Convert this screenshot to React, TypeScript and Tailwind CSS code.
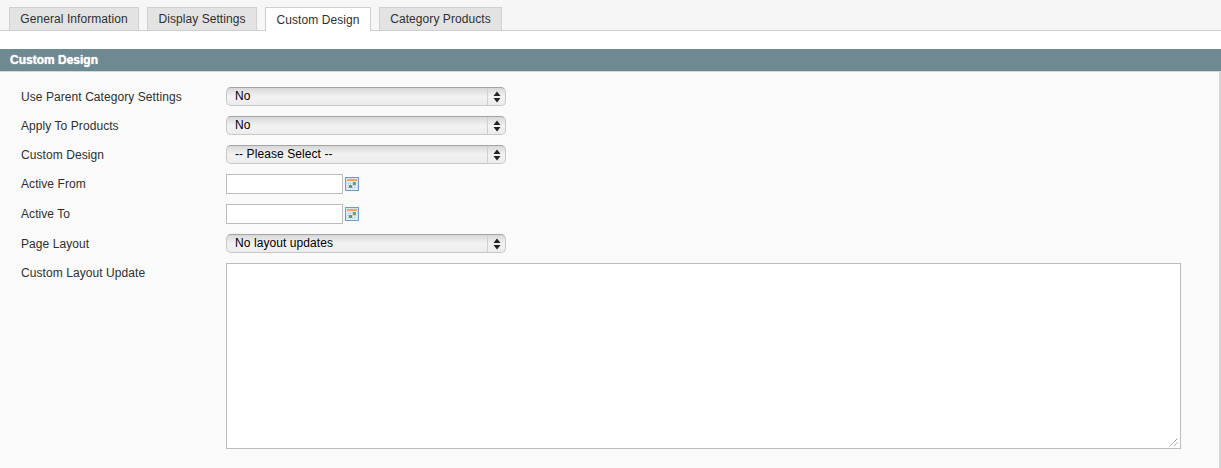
const tabs = [
  { name: "General Information", width: "w-[130px]" },
  { name: "Display Settings", width: "w-[110px]" },
  { name: "Custom Design", width: "w-[106px]", active: true },
  { name: "Category Products", width: "w-[123px]" },
];

function Label({ children }: { children: string }) {
  return <label className="mt-[1px] w-[226px] shrink-0 pl-[21px] leading-[18px] tracking-[0.07px]">{children}</label>;
}

function FakeSelect({ value }: { value: string }) {
  return (
    <div className="flex h-[19px] w-[280px] items-stretch rounded-[5px] border border-[#c8c8c8] border-t-[#a4a4a4] bg-gradient-to-b from-[#d8d8d8] via-[#f2f2f2] to-[#ececec] text-black">
      <span className="flex-1 pl-2 leading-[16px] tracking-[0.08px]">{value}</span>
      <span className="flex w-[18px] items-center justify-center border-l border-[#d0d0d0]">
        <svg width="8" height="12" viewBox="0 0 8 12">
          <path d="M4 0.5 L7.5 5 H0.5 Z M0.5 7 H7.5 L4 11.5 Z" fill="#222" />
        </svg>
      </span>
    </div>
  );
}

function CalendarIcon() {
  return (
    <svg width="14" height="14" viewBox="0 0 14 14" className="ml-[2px] mt-[3px]">
      <rect x="0.5" y="0.5" width="13" height="13" fill="#d5e4f6" stroke="#6f9bd4" />
      <rect x="2" y="2" width="10" height="2.5" fill="#f5a65b" />
      <rect x="2" y="4.5" width="10" height="8" fill="#f4f7fb" />
      <path d="M2 6.5h10M2 8.5h10M2 10.5h10M3.5 5v7M5.5 5v7M7.5 5v7M9.5 5v7" stroke="#b9cde6" strokeWidth="0.7" />
      <rect x="8" y="5" width="3" height="3" fill="#63ad63" />
      <rect x="4" y="8" width="3" height="3" fill="#5aa55a" />
    </svg>
  );
}

function DateInput() {
  return (
    <div className="flex">
      <div className="h-[20px] w-[117px] border border-[#bcbcbc] bg-white" />
      <CalendarIcon />
    </div>
  );
}

function ResizeGrip() {
  return (
    <svg width="8" height="8" viewBox="0 0 8 8" className="absolute bottom-[2px] right-[2px]">
      <path d="M0.5 7.5 L7.5 0.5 M4.5 7.5 L7.5 4.5" stroke="#666" strokeWidth="1" strokeDasharray="1 0.6" />
    </svg>
  );
}

export default function App() {
  return (
    <div className="h-[468px] w-[1221px] overflow-hidden bg-white font-['Liberation_Sans',Arial,sans-serif] text-[12px] text-[#2f2f2f]">
      <div className="flex h-[31px] gap-[8px] border-b border-[#cfcfcf] bg-[#f6f6f6] pl-[9px] pt-[7px]">
        {tabs.map((tab) => (
          <div
            key={tab.name}
            className={`flex items-center justify-center border border-b-0 border-[#d0d0d0] tracking-[0.07px] ${tab.width} ${
              tab.active ? "h-[24px] bg-white" : "h-[23px] bg-[#e3e3e3]"
            }`}
          >
            {tab.name}
          </div>
        ))}
      </div>

      <div className="mt-[18px] flex h-[22px] items-center bg-[#6f8992] pl-[10px] font-bold text-white [text-shadow:0_0_1px_#ffffff]">
        Custom Design
      </div>

      <div className="h-[397px] border-r-2 border-t border-[#d6d6d6] bg-[#fafafa] pt-[15px]">
        <div className="flex h-[29px] items-start">
          <Label>Use Parent Category Settings</Label>
          <FakeSelect value="No" />
        </div>
        <div className="flex h-[29px] items-start">
          <Label>Apply To Products</Label>
          <FakeSelect value="No" />
        </div>
        <div className="flex h-[29px] items-start">
          <Label>Custom Design</Label>
          <FakeSelect value="-- Please Select --" />
        </div>
        <div className="flex h-[30px] items-start">
          <Label>Active From</Label>
          <DateInput />
        </div>
        <div className="flex h-[30px] items-start">
          <Label>Active To</Label>
          <DateInput />
        </div>
        <div className="flex h-[29px] items-start">
          <Label>Page Layout</Label>
          <FakeSelect value="No layout updates" />
        </div>
        <div className="flex items-start">
          <Label>Custom Layout Update</Label>
          <div className="relative h-[186px] w-[955px] border border-[#bcbcbc] bg-white">
            <ResizeGrip />
          </div>
        </div>
      </div>
    </div>
  );
}
